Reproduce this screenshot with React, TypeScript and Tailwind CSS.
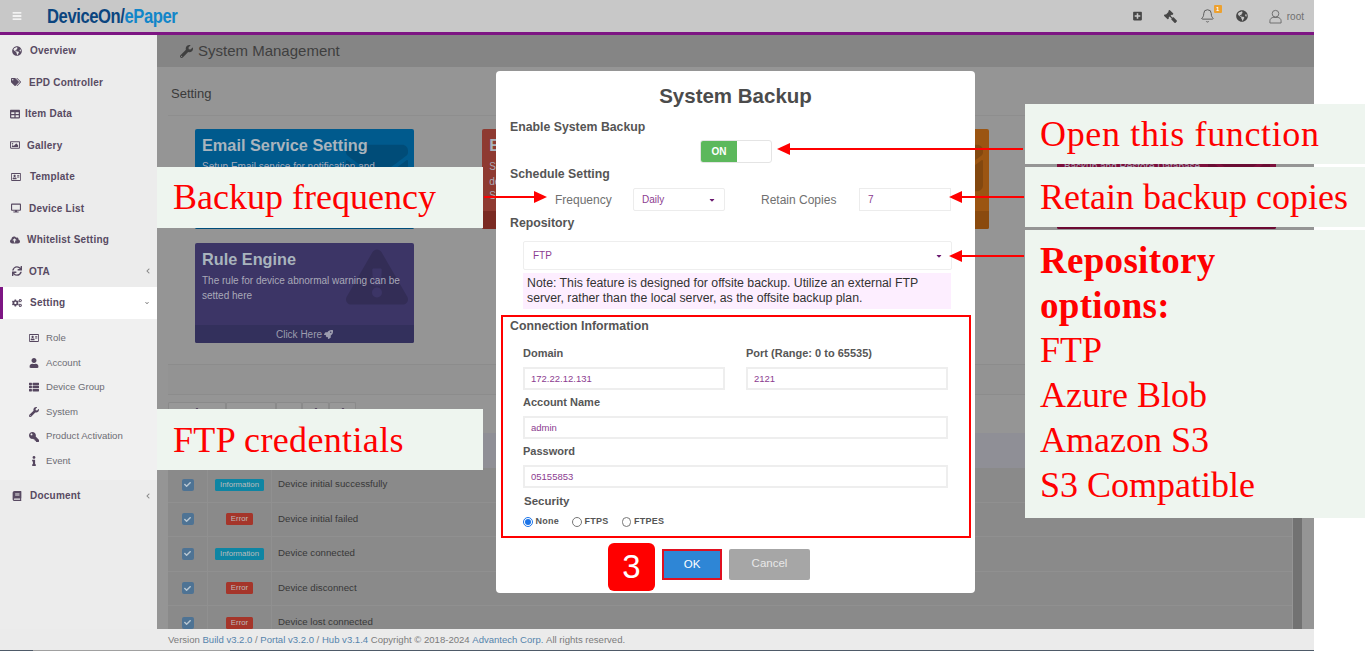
import React from "react";
import {
  FaGlobeAmericas, FaTags, FaTable, FaRegImage, FaRegAddressCard, FaDesktop, FaCloudUploadAlt, FaSync, FaCogs,
  FaUser, FaThList, FaWrench, FaKey, FaInfo, FaBook, FaPlusSquare, FaGavel, FaBars, FaChevronLeft,
  FaChevronDown, FaRocket, FaCheck, FaEnvelope, FaExclamationTriangle, FaCaretDown,
} from "react-icons/fa";
import { Bell } from "lucide-react";

const sans = "font-['Liberation_Sans',Arial,sans-serif]";
const serif = "font-['Liberation_Serif','Times_New_Roman',serif]";

type IconT = React.ComponentType<{ className?: string }>;
type NavItem = { label: string; Icon: IconT; box: string; arrow?: "left" | "down"; active?: boolean };
const nav: NavItem[] = [
  { label: "Overview", Icon: FaGlobeAmericas, box: "pl-[12px] gap-[8px]" },
  { label: "EPD Controller", Icon: FaTags, box: "pl-[11px] gap-[8px]" },
  { label: "Item Data", Icon: FaTable, box: "pl-[10px] gap-[5px]" },
  { label: "Gallery", Icon: FaRegImage, box: "pl-[10px] gap-[7px]" },
  { label: "Template", Icon: FaRegAddressCard, box: "pl-[11px] gap-[9px]" },
  { label: "Device List", Icon: FaDesktop, box: "pl-[11px] gap-[8px]" },
  { label: "Whitelist Setting", Icon: FaCloudUploadAlt, box: "pl-[10px] gap-[7px]" },
  { label: "OTA", Icon: FaSync, box: "pl-[12px] gap-[7px]", arrow: "left" },
  { label: "Setting", Icon: FaCogs, box: "pl-[9px] gap-[8px]", arrow: "down", active: true },
];
const subs: { label: string; Icon: IconT; flip?: boolean }[] = [
  { label: "Role", Icon: FaRegAddressCard },
  { label: "Account", Icon: FaUser },
  { label: "Device Group", Icon: FaThList },
  { label: "System", Icon: FaWrench },
  { label: "Product Activation", Icon: FaKey, flip: true },
  { label: "Event", Icon: FaInfo },
];
const rows: [string, string][] = [
  ["Information", "Device initial successfully"],
  ["Error", "Device initial failed"],
  ["Information", "Device connected"],
  ["Error", "Device disconnect"],
  ["Error", "Device lost connected"],
];

function Arrow({ x1, x2, y }: { x1: number; x2: number; y: number }) {
  const dir = x2 > x1 ? 1 : -1;
  return (
    <>
      <line x1={x1} y1={y} x2={x2 - dir * 6} y2={y} stroke="#ff0000" strokeWidth="2" />
      <polygon points={`${x2},${y} ${x2 - dir * 13},${y - 6} ${x2 - dir * 13},${y + 6}`} fill="#ff0000" />
    </>
  );
}

function Field({ label, value, className = "" }: { label: string; value: string; className?: string }) {
  return (
    <div className={className}>
      <div className="text-[11px] leading-[14px] font-bold text-[#565656] h-[21px]">{label}</div>
      <div className="h-[23px] border-2 border-[#eeeeee] pl-[6px] text-[9.5px] leading-[19px] text-[#8c3c90]">{value}</div>
    </div>
  );
}

function Radio({ label, on }: { label: string; on?: boolean }) {
  return (
    <div className="flex items-center gap-[3px]">
      <span className={`w-[9.5px] h-[9.5px] rounded-full border flex items-center justify-center ${on ? "border-[#1b74e8]" : "border-[#777777]"}`}>
        {on && <span className="w-[5.5px] h-[5.5px] rounded-full bg-[#1b74e8]" />}
      </span>
      <span className="text-[9px] font-bold tracking-[0.25px] text-[#555555]">{label}</span>
    </div>
  );
}

function Card({ title, text, bg, foot, Icon, iconClass }: { title: string; text: React.ReactNode; bg: string; foot: string; Icon: IconT; iconClass: string }) {
  return (
    <div className={`relative w-[219px] h-[100px] rounded-[2px] overflow-hidden flex flex-col ${bg}`}>
      <Icon className={`absolute w-[62px] h-[62px] text-black/15 ${iconClass}`} />
      <div className="relative flex-1 px-[7px] pt-[6px]">
        <div className="text-[16.3px] leading-[20px] font-bold text-[#a9b4bd]">{title}</div>
        <div className="mt-[5px] text-[10px] leading-[14.5px] text-[#a9a9b8]">{text}</div>
      </div>
      <div className={`relative h-[18px] flex items-center justify-center gap-[2px] text-[10px] text-[#9c9cae] ${foot}`}>
        Click Here <FaRocket className="w-[9px] h-[9px]" />
      </div>
    </div>
  );
}

const panel = `absolute bg-[#eef5ef] text-[#ff0000] text-[36px] ${serif}`;

export default function App() {
  return (
    <div className={`relative w-[1371px] h-[651px] overflow-hidden bg-white ${sans}`}>
      <div className="w-[1314px] h-[651px] flex flex-col">
        <header className="h-[35px] shrink-0 bg-[#c8c8c8] border-b-[3px] border-[#7d1583] flex items-center pl-[12px] pr-[10px]">
          <FaBars className="w-[10px] h-[10px] text-white" />
          <div className="ml-[25px] w-[131px] whitespace-nowrap origin-left scale-x-[0.83] text-[20px] font-bold tracking-[-0.5px] text-[#0b457f]">
            DeviceOn/<span className="text-[#1286c9]">ePaper</span>
          </div>
          <div className="ml-auto flex items-center text-[#474747]">
            <FaPlusSquare className="w-[9px] h-[10px]" />
            <FaGavel className="ml-[22px] w-[13px] h-[13px] -scale-x-100" />
            <div className="relative ml-[23px]">
              <Bell className="w-[15px] h-[16px] text-[#555555]" strokeWidth={1.5} />
              <span className="absolute -top-[3px] -right-[7px] w-[8px] h-[8px] rounded-[1px] bg-[#eda12f] text-white text-[6px] leading-[8px] text-center font-bold">1</span>
            </div>
            <FaGlobeAmericas className="ml-[21px] w-[12px] h-[12px]" />
            <svg viewBox="0 0 14 16" className="ml-[21px] w-[13px] h-[15px]" fill="none" stroke="#6a6a6a" strokeWidth="1">
              <circle cx="7" cy="5" r="3.6" />
              <path d="M1 15v-2.500c0-2 2-3.500 3.500-3.500h5c1.500 0 3.500 1.500 3.500 3.500V15z" />
            </svg>
            <span className="ml-[5px] text-[10px] text-[#707070]">root</span>
          </div>
        </header>

        <div className="flex-1 flex min-h-0">
          <aside className="w-[157px] shrink-0 bg-[#ececec] flex flex-col text-[10px] font-bold tracking-[0.22px] text-[#584a62]">
            {nav.map(({ label, Icon, box, arrow, active }) => (
              <div key={label} className={`h-[31.5px] shrink-0 flex items-center pr-[7px] ${box} ${active ? "bg-white border-l-[3px] border-[#7d1583]" : ""}`}>
                <Icon className="w-[10px] h-[10px] shrink-0" />
                <span>{label}</span>
                {arrow === "left" && <FaChevronLeft className="ml-auto w-[4px] h-[6px] text-[#888888]" />}
                {arrow === "down" && <FaChevronDown className="ml-auto w-[6px] h-[4px] text-[#666666]" />}
              </div>
            ))}
            <div className="h-[161.5px] shrink-0 bg-[#f0f0f0] pt-[7.5px] text-[9.6px] font-normal tracking-normal text-[#6d6d74]">
              {subs.map(({ label, Icon, flip }) => (
                <div key={label} className="h-[24.6px] flex items-center pl-[28px] gap-[7px]">
                  <span className="w-[11px] flex justify-center">
                    <Icon className={`w-[10px] h-[10px] text-[#55465f] ${flip ? "-scale-x-100" : ""}`} />
                  </span>
                  <span>{label}</span>
                </div>
              ))}
            </div>
            <div className="h-[31.5px] shrink-0 flex items-center pl-[12px] pr-[7px] gap-[8px]">
              <FaBook className="w-[10px] h-[10px]" />
              <span>Document</span>
              <FaChevronLeft className="ml-auto w-[4px] h-[6px] text-[#888888]" />
            </div>
          </aside>

          <main className="flex-1 min-w-0 bg-[#959595] flex flex-col overflow-hidden">
            <div className="h-[32px] shrink-0 bg-[#858585] flex items-center pl-[23px] gap-[5px] text-[15px] text-[#3f3f3f]">
              <FaWrench className="w-[13px] h-[13px]" /> System Management
            </div>
            <div className="pl-[14px] pt-[19px] h-[48px] shrink-0 text-[13px] leading-[15px] text-[#3a3a3a]">Setting</div>
            <div className="ml-[11px] mr-[10px] border-t border-[#8e8e8e]" />
            <div className="ml-[38px] mt-[13px] grid grid-cols-[repeat(4,219px)] gap-x-[68.3px] gap-y-[14px]">
              <Card title="Email Service Setting" text="Setup Email service for notification and" bg="bg-[#005a8d]" foot="bg-[#004d7a]" Icon={FaEnvelope} iconClass="right-[6px] top-[8px]" />
              <Card title="Event Setting" text={<>Setting device event<br />details for notification<br />Setting</>} bg="bg-[#8e3a31]" foot="bg-[#7a2a22]" Icon={FaEnvelope} iconClass="right-[6px] top-[8px]" />
              <Card title="Server Setting" text="Setup server" bg="bg-[#9b5512]" foot="bg-[#8a4a0e]" Icon={FaEnvelope} iconClass="right-[6px] top-[8px]" />
              <Card title="Backup" text="Backup and Restore Database" bg="bg-[#7d103c]" foot="bg-[#6b0a32]" Icon={FaEnvelope} iconClass="right-[6px] top-[8px]" />
              <Card title="Rule Engine" text="The rule for device abnormal warning can be setted here" bg="bg-[#3c3566]" foot="bg-[#33305c]" Icon={FaExclamationTriangle} iconClass="right-[6px] top-[3px]" />
            </div>
            <div className="mt-[21px] ml-[11px] mr-[10px] h-[31px] shrink-0 border-y border-[#8c8c8c] bg-[#939393]" />
            <div className="ml-[11px] mr-[12px] mt-[7px] flex-1 min-h-0 flex overflow-hidden">
              <div className="flex-1 min-w-0">
                <div className="flex h-[31px] items-start text-[#55465f]">
                  {[58, 50, 26, 27, 27].map((w, i) => (
                    <div key={i} style={{ width: w }} className="h-[25px] border border-b-0 border-[#8a8a8a] rounded-t-[2px] bg-[#989898] flex justify-center pt-[5px]">
                      {i !== 1 && i !== 2 && <FaUser className="w-[6px] h-[6px]" />}
                    </div>
                  ))}
                </div>
                <div className="h-[35px] bg-[#8f8f96]" />
                {rows.map(([kind, text], i) => (
                  <div key={i} className="h-[34.5px] flex items-center border-b border-[#909090] bg-[#8a8a8a] text-[9.7px] text-[#383838]">
                    <div className="w-[40px] h-full flex items-center justify-center border-r border-[#909090]">
                      <span className="w-[12px] h-[12px] rounded-[2px] bg-[#4e7394] flex items-center justify-center">
                        <FaCheck className="w-[7px] h-[7px] text-[#b9c7d2]" />
                      </span>
                    </div>
                    <div className="w-[64px] h-full flex items-center justify-center border-r border-[#909090]">
                      <span className={`h-[12px] rounded-[1.5px] px-[4.5px] text-[7.8px] leading-[12px] text-[#bcbcbc] ${kind === "Error" ? "bg-[#a5352a]" : "bg-[#0f85a3]"}`}>{kind}</span>
                    </div>
                    <div className="pl-[6px]">{text}</div>
                  </div>
                ))}
              </div>
              <div className="w-[9px] ml-[1px] bg-[#727272]" />
            </div>
          </main>
        </div>

        <footer className="h-[21px] shrink-0 bg-[#ebebeb] pl-[168px] pt-[2px] flex items-center text-[9.56px] text-[#7b7b7b]">
          <span>Version&nbsp;</span><span className="text-[#5584ab]">Build v3.2.0</span><span>&nbsp;/&nbsp;</span>
          <span className="text-[#5584ab]">Portal v3.2.0</span><span>&nbsp;/&nbsp;</span>
          <span className="text-[#5584ab]">Hub v3.1.4</span><span>&nbsp;Copyright © 2018-2024&nbsp;</span>
          <span className="text-[#5584ab]">Advantech Corp.</span><span>&nbsp;All rights reserved.</span>
        </footer>
        <div className="h-[1px] shrink-0 flex">
          <div className="w-[33px] bg-[#4e5a68]" />
          <div className="w-[197px] bg-[#a0a0a0]" />
          <div className="flex-1 bg-[#4e5a68]" />
        </div>
      </div>

      {/* Modal */}
      <div className="absolute left-[496px] top-[71px] w-[479px] h-[522px] rounded-[4px] bg-white">
        <div className="text-center text-[20.5px] leading-[24px] font-bold text-[#4b4b4b] pt-[13px]">System Backup</div>
        <div className="pl-[14px] mt-[12px] text-[12.3px] leading-[14px] font-bold text-[#555555]">Enable System Backup</div>
        <div className="mt-[6px] ml-[204px] w-[72px] h-[23px] rounded-[3px] border border-[#e4e4e4] flex overflow-hidden">
          <div className="w-[36px] bg-[#5cb85c] text-white text-[10px] font-bold leading-[21px] text-center">ON</div>
        </div>
        <div className="pl-[14px] mt-[4px] text-[12.3px] leading-[14px] font-bold text-[#555555]">Schedule Setting</div>
        <div className="mt-[7px] h-[23px] flex items-center text-[12px] text-[#707070]">
          <span className="ml-[59px] w-[78px]">Frequency</span>
          <div className="w-[92px] h-[23px] border border-[#ececec] rounded-[2px] pl-[8px] pr-[8px] flex items-center justify-between text-[10px] text-[#8c3c90]">
            Daily <FaCaretDown className="w-[8px] h-[8px] text-[#6b1a70]" />
          </div>
          <span className="ml-[36px] w-[98px]">Retain Copies</span>
          <div className="w-[92px] h-[23px] border border-[#ececec] pl-[8px] text-[10px] leading-[21px] text-[#8c3c90]">7</div>
        </div>
        <div className="pl-[14px] mt-[5px] text-[12.3px] leading-[14px] font-bold text-[#555555]">Repository</div>
        <div className="mt-[11px] ml-[27px] w-[429px] h-[29px] border border-[#eeeeee] rounded-[2px] pl-[9px] pr-[8px] flex items-center justify-between text-[10px] text-[#8c3c90]">
          FTP <FaCaretDown className="w-[8px] h-[8px] text-[#6b1a70]" />
        </div>
        <div className="mt-[3px] ml-[27px] w-[428px] h-[36px] bg-[#fdeeff] px-[4px] pt-[3px] text-[12.3px] leading-[14.5px] text-[#333333]">
          Note: This feature is designed for offsite backup. Utilize an external FTP server, rather than the local server, as the offsite backup plan.
        </div>
        <div className="mt-[6px] ml-[5px] w-[470px] h-[223px] border-2 border-[#ff0000] pl-[7px] pr-[21px] pt-[2px]">
          <div className="text-[12.3px] leading-[14px] font-bold text-[#555555]">Connection Information</div>
          <div className="pl-[13px]">
            <div className="mt-[13px] grid grid-cols-[202px_202px] gap-x-[21px]">
              <Field label="Domain" value="172.22.12.131" />
              <Field label="Port (Range: 0 to 65535)" value="2121" />
            </div>
            <Field className="mt-[5px]" label="Account Name" value="admin" />
            <Field className="mt-[5px]" label="Password" value="05155853" />
            <div className="mt-[6px] ml-[1px] text-[11.5px] leading-[14px] font-bold text-[#555555]">Security</div>
            <div className="mt-[8px] flex items-center gap-[13px] h-[12px]">
              <Radio label="None" on />
              <Radio label="FTPS" />
              <Radio label="FTPES" />
            </div>
          </div>
        </div>
        <div className="mt-[5px] ml-[112px] flex items-start">
          <div className="w-[47px] h-[48px] rounded-[6px] bg-[#ff0000] text-white text-[33px] leading-[48px] text-center">3</div>
          <div className="mt-[6px] ml-[7px] w-[60px] h-[31px] border-2 border-[#e01020] bg-[#2e86d6] text-white text-[11.5px] leading-[27px] text-center">OK</div>
          <div className="mt-[6px] ml-[7px] w-[81px] h-[31px] rounded-[2px] bg-[#a6a6a6] text-[#e8e8e8] text-[11.5px] leading-[29px] text-center">Cancel</div>
        </div>
      </div>

      {/* Annotation panels */}
      <div className={`${panel} left-[157px] top-[167px] w-[326px] h-[61px] pl-[16px] leading-[60px]`}>Backup frequency</div>
      <div className={`${panel} left-[157px] top-[409px] w-[326px] h-[61px] pl-[16px] leading-[62px] tracking-[0.35px]`}>FTP credentials</div>
      <div className={`${panel} left-[1025px] top-[104px] w-[340px] h-[60px] pl-[15px] leading-[60px] tracking-[0.65px]`}>Open this function</div>
      <div className={`${panel} left-[1025px] top-[167px] w-[340px] h-[60px] pl-[15px] leading-[60px]`}>Retain backup copies</div>
      <div className={`${panel} left-[1025px] top-[230px] w-[340px] h-[288px] pl-[15px] pt-[8px] leading-[45px]`}>
        <div className="font-bold text-[37px] tracking-[0.3px]">Repository<br />options:</div>
        <div>FTP</div>
        <div>Azure Blob</div>
        <div>Amazon S3</div>
        <div>S3 Compatible</div>
      </div>

      {/* Arrows */}
      <svg className="absolute left-0 top-0 pointer-events-none" width="1371" height="651">
        <Arrow x1={1023} x2={777} y={149} />
        <Arrow x1={1024} x2={949} y={197} />
        <Arrow x1={1024} x2={949} y={256} />
        <Arrow x1={484} x2={547} y={197} />
      </svg>
    </div>
  );
}
